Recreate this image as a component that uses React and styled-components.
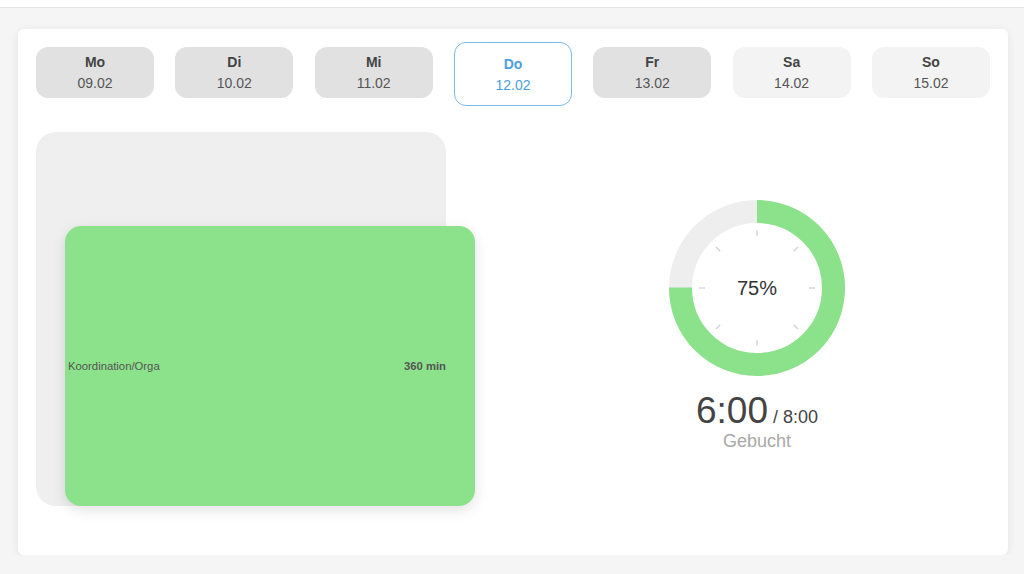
import React from 'react';
import styled, { createGlobalStyle } from 'styled-components';

const GlobalStyle = createGlobalStyle`
  body {
    margin: 0;
    background: #f5f5f5;
    font-family: "Liberation Sans", Arial, sans-serif;
  }
`

const TopBar = styled.div`
  height: 7px;
  background: #ffffff;
  border-bottom: 1px solid #e3e3e3;
`

const Card = styled.main`
  margin: 21px 16px 0 18px;
  padding: 18px 18px 49px;
  background: #ffffff;
  border-radius: 6px;
  box-shadow: 0 2px 10px rgba(0, 0, 0, 0.07);
`

const WeekRow = styled.nav`
  display: flex;
  justify-content: space-between;
  align-items: flex-start;
`

const DayButton = styled.button`
  width: 118px;
  height: ${p => (p.$active ? '64px' : '51px')};
  margin-top: ${p => (p.$active ? '-5px' : '0')};
  display: flex;
  flex-direction: column;
  align-items: center;
  justify-content: center;
  gap: 7px;
  border-radius: 12px;
  border: 1px solid ${p => (p.$active ? '#7bb9ec' : 'transparent')};
  background: ${p => (p.$active ? '#ffffff' : p.$weekend ? '#f3f3f3' : '#e1e1e1')};
  color: ${p => (p.$active ? '#4aa0e4' : '#444444')};
  font-family: inherit;
  padding: 0;
  cursor: pointer;
`

const DayName = styled.span`
  font-size: 14px;
  font-weight: 700;
  line-height: 1;
`

const DayDate = styled.span`
  font-size: 14px;
  line-height: 1;
  color: ${p => (p.$active ? '#4aa0e4' : '#555555')};
`

const Content = styled.section`
  margin-top: 26px;
  display: grid;
  grid-template-columns: 466px 466px;
  column-gap: 22px;
`

const Timeline = styled.div`
  width: 410px;
  height: 374px;
  background: #efefef;
  border-radius: 20px;
  display: flex;
  align-items: flex-end;
`

const Block = styled.div`
  flex: 0 0 410px;
  height: 280px;
  margin-left: 29px;
  background: #8be28a;
  border-radius: 16px;
  box-shadow: 0 4px 14px rgba(0, 0, 0, 0.12);
  display: flex;
  align-items: center;
  justify-content: space-between;
  padding: 0 29px 0 3px;
  box-sizing: border-box;
  font-size: 11.3px;
  color: #555555;
`

const BlockMinutes = styled.span`
  font-weight: 700;
`

const Summary = styled.div`
  display: flex;
  flex-direction: column;
  align-items: center;
  justify-content: center;
  padding-top: 12px;
`

const Ring = styled.div`
  position: relative;
  width: 176px;
  height: 176px;
`

const Percent = styled.span`
  position: absolute;
  inset: 0;
  display: flex;
  align-items: center;
  justify-content: center;
  font-size: 20px;
  color: #333333;
`

const Hours = styled.div`
  margin-top: 16px;
  display: flex;
  align-items: baseline;
  line-height: 1;
  color: #444444;
`

const Booked = styled.span`
  font-size: 37px;
`

const Target = styled.span`
  font-size: 18px;
  margin-left: 5px;
`

const Label = styled.div`
  margin-top: 3px;
  font-size: 18px;
  line-height: 1;
  color: #a8a8a8;
`

const days = [
  { name: 'Mo', date: '09.02' },
  { name: 'Di', date: '10.02' },
  { name: 'Mi', date: '11.02' },
  { name: 'Do', date: '12.02', active: true },
  { name: 'Fr', date: '13.02' },
  { name: 'Sa', date: '14.02', weekend: true },
  { name: 'So', date: '15.02', weekend: true },
]

const Donut = ({ value }) => {
  const r = 76.5
  const c = 2 * Math.PI * r
  const ticks = [0, 45, 90, 135, 180, 225, 270, 315]
  return (
    <Ring>
      <svg width="176" height="176" viewBox="0 0 176 176">
        <circle cx="88" cy="88" r={r} fill="none" stroke="#eeeeee" strokeWidth="23" />
        <circle
          cx="88" cy="88" r={r} fill="none" stroke="#8be28a" strokeWidth="23"
          strokeDasharray={`${c * value} ${c}`}
          transform="rotate(-90 88 88)"
        />
        {ticks.map(a => (
          <line
            key={a}
            x1="88" y1={88 - 52} x2="88" y2={88 - 58}
            stroke="#c9cfdb" strokeWidth="1.2"
            transform={`rotate(${a} 88 88)`}
          />
        ))}
      </svg>
      <Percent>{Math.round(value * 100)}%</Percent>
    </Ring>
  )
}

const App = () => {
  return (
    <>
      <GlobalStyle />
      <TopBar />
      <Card>
        <WeekRow>
          {days.map(d => (
            <DayButton key={d.name} $active={d.active} $weekend={d.weekend}>
              <DayName>{d.name}</DayName>
              <DayDate $active={d.active}>{d.date}</DayDate>
            </DayButton>
          ))}
        </WeekRow>
        <Content>
          <Timeline>
            <Block>
              <span>Koordination/Orga</span>
              <BlockMinutes>360 min</BlockMinutes>
            </Block>
          </Timeline>
          <Summary>
            <Donut value={0.75} />
            <Hours>
              <Booked>6:00</Booked>
              <Target>/ 8:00</Target>
            </Hours>
            <Label>Gebucht</Label>
          </Summary>
        </Content>
      </Card>
    </>
  )
}

export default App;
